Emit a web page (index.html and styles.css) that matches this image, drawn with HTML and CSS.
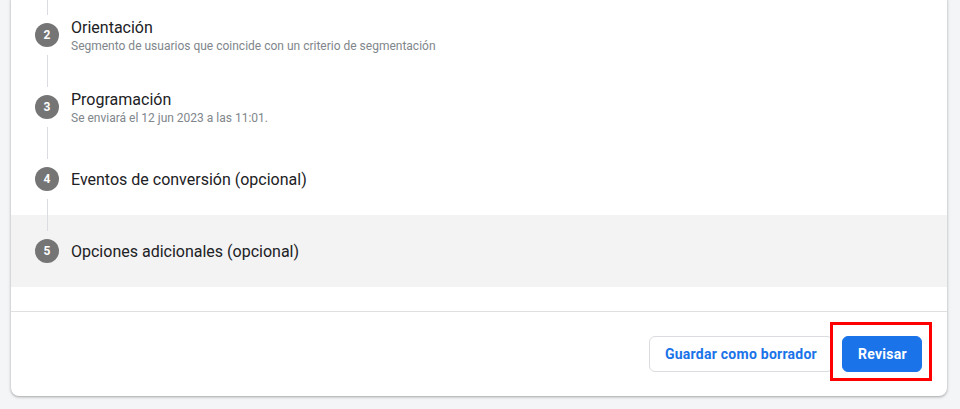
FILE: index.html
```html
<!DOCTYPE html>
<html lang="es">
<head>
<meta charset="utf-8">
<title>Campaña</title>
<link rel="stylesheet" href="styles.css">
</head>
<body>
<div class="card">
  <ol class="steps">
    <li class="step">
      <div class="rail"><span class="seg"></span><span class="num">2</span><span class="seg"></span></div>
      <div class="text"><div class="title">Orientación</div><div class="sub">Segmento de usuarios que coincide con un criterio de segmentación</div></div>
    </li>
    <li class="step">
      <div class="rail"><span class="seg"></span><span class="num">3</span><span class="seg"></span></div>
      <div class="text"><div class="title">Programación</div><div class="sub">Se enviará el 12 jun 2023 a las 11:01.</div></div>
    </li>
    <li class="step">
      <div class="rail"><span class="seg"></span><span class="num">4</span><span class="seg"></span></div>
      <div class="text"><div class="title">Eventos de conversión (opcional)</div></div>
    </li>
    <li class="step active">
      <div class="rail"><span class="seg"></span><span class="num">5</span><span class="seg hidden"></span></div>
      <div class="text"><div class="title">Opciones adicionales (opcional)</div></div>
    </li>
  </ol>
  <div class="footer">
    <button class="btn btn-outline">Guardar como borrador</button>
    <span class="highlight-wrap">
      <button class="btn btn-primary">Revisar</button>
      <span class="highlight"></span>
    </span>
  </div>
</div>
</body>
</html>
```
FILE: styles.css
```css
html, body {
  margin: 0;
  height: 409px;
}
body {
  background: #f4f5f7;
  font-family: Roboto, "Noto Sans", Arial, sans-serif;
  display: flex;
  flex-direction: column;
  justify-content: flex-end;
  overflow: hidden;
  padding: 0 13px 13px 11px;
  box-sizing: border-box;
}
.card {
  background: #fff;
  border-radius: 0 0 8px 8px;
  box-shadow: 0 1px 2px rgba(60,64,67,0.3), 0 1px 3px 1px rgba(60,64,67,0.12);
  flex-shrink: 0;
}
.steps {
  list-style: none;
  margin: 0;
  padding: 0 0 24px 0;
}
.step {
  display: flex;
  align-items: center;
  height: 72px;
  padding-left: 24px;
}
.step.active {
  background: #f3f3f3;
}
.rail {
  display: flex;
  flex-direction: column;
  align-items: center;
  width: 24px;
  height: 72px;
  gap: 8px;
  margin-right: 12px;
  flex-shrink: 0;
}
.seg {
  flex: 1;
  width: 1px;
  background: #dadce0;
}
.seg.hidden {
  visibility: hidden;
}
.num {
  width: 24px;
  height: 24px;
  border-radius: 50%;
  background: #757575;
  color: #fff;
  font-size: 12px;
  font-weight: 700;
  display: flex;
  align-items: center;
  justify-content: center;
  flex-shrink: 0;
}
.text {
  padding-top: 1px;
}
.title {
  font-size: 16px;
  line-height: 20px;
  color: #202124;
}
.sub {
  font-size: 12px;
  line-height: 16px;
  color: #80868b;
}
.footer {
  border-top: 1px solid #e0e0e0;
  display: flex;
  justify-content: flex-end;
  align-items: center;
  gap: 9px;
  padding: 24px 25px 24px 24px;
}
.btn {
  font-family: Roboto, "Noto Sans", Arial, sans-serif;
  font-size: 14px;
  font-weight: 700;
  letter-spacing: 0.25px;
  height: 36px;
  padding: 0 15px;
  border-radius: 6px;
  cursor: pointer;
  box-sizing: border-box;
}
.btn-outline {
  background: #fff;
  border: 1px solid #dadce0;
  color: #1a73e8;
}
.btn-primary {
  background: #1a73e8;
  border: 1px solid #1a73e8;
  color: #fff;
  width: 80px;
  display: block;
}
.highlight-wrap {
  position: relative;
  display: block;
}
.highlight {
  position: absolute;
  top: -14px;
  left: -12px;
  right: -10px;
  bottom: -9px;
  border: 3px solid #ff0000;
  pointer-events: none;
}
```
